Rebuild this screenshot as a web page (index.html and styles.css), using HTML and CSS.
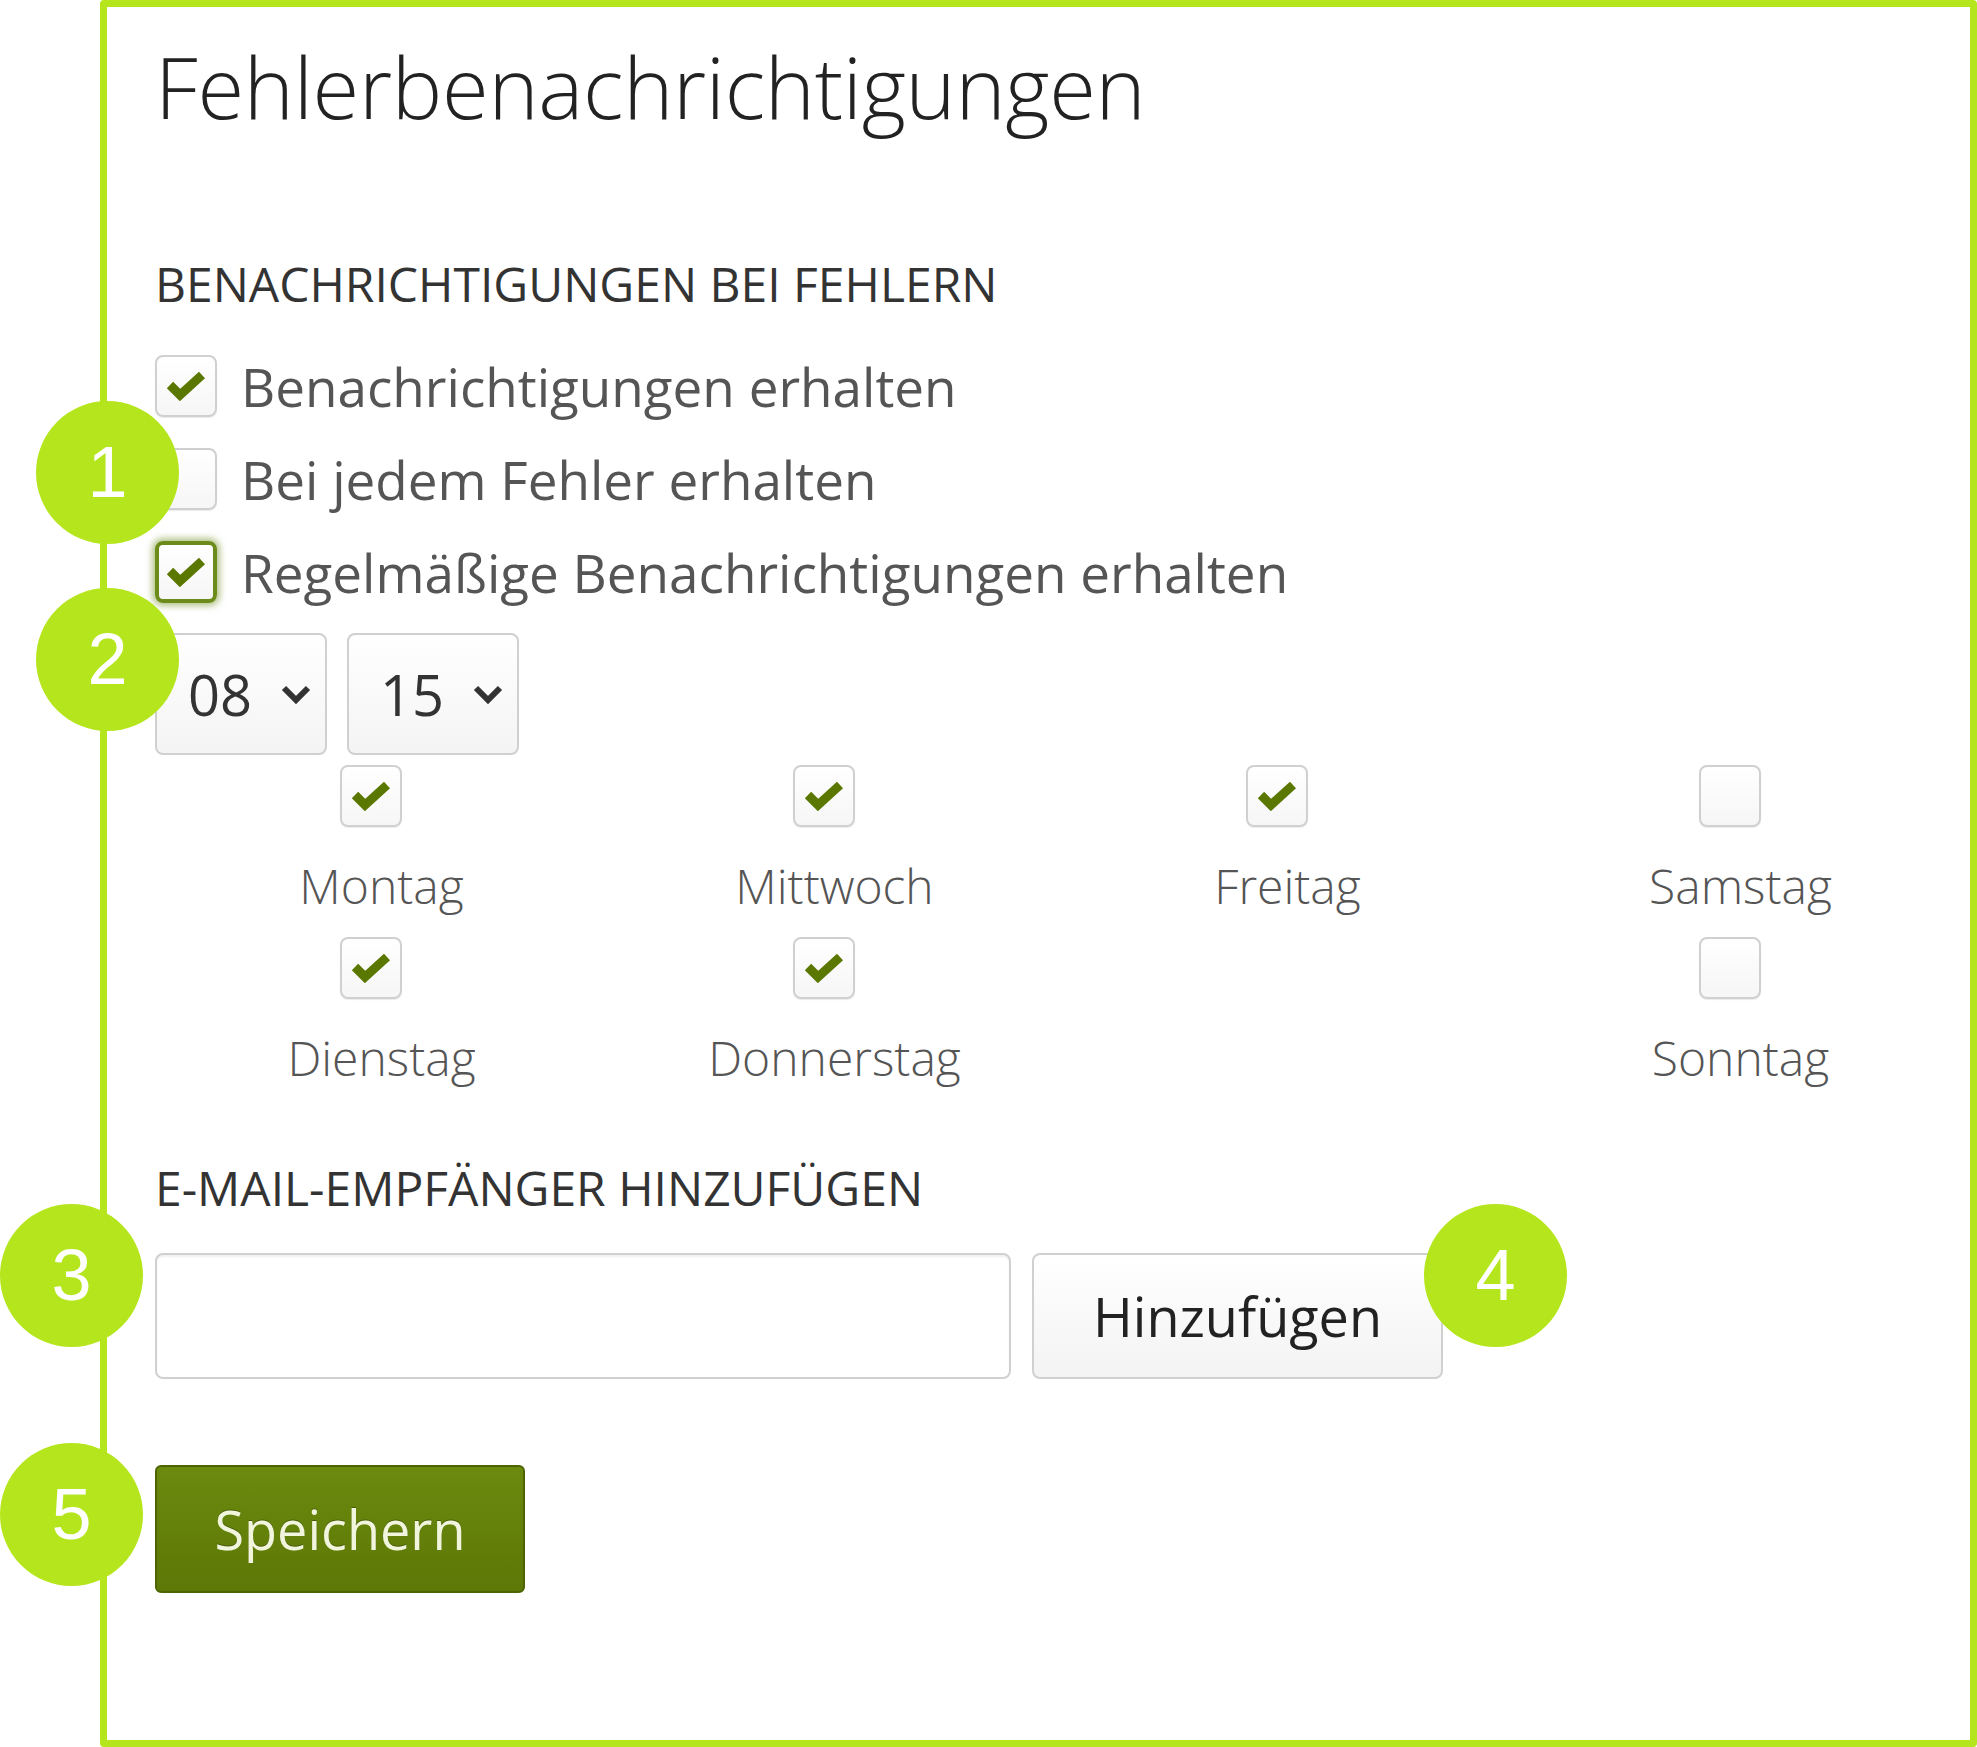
FILE: index.html
```html
<!DOCTYPE html>
<html lang="de">
<head>
  <meta charset="UTF-8">
  <meta name="viewport" content="width=device-width, initial-scale=1.0">
  <title>Fehlerbenachrichtigungen</title>
  <link rel="stylesheet" href="styles.css">
</head>
<body>

<div class="frame">
  <h1>Fehlerbenachrichtigungen</h1>

  <h2>Benachrichtigungen bei Fehlern</h2>
  <div class="options">
    <label class="option">
      <span class="box checked"><svg viewBox="0 0 40 30"><polyline points="4,14 14,24 36,4"/></svg></span>
      Benachrichtigungen erhalten
    </label>
    <label class="option">
      <span class="box"></span>
      Bei jedem Fehler erhalten
    </label>
    <label class="option">
      <span class="box checked focus"><svg viewBox="0 0 40 30"><polyline points="4,14 14,24 36,4"/></svg></span>
      Regelmäßige Benachrichtigungen erhalten
    </label>
  </div>

  <div class="time">
    <div class="select">
      <span>08</span>
      <svg class="chevron" viewBox="0 0 30 20"><polyline points="3,4 15,16 27,4"/></svg>
    </div>
    <div class="select">
      <span>15</span>
      <svg class="chevron" viewBox="0 0 30 20"><polyline points="3,4 15,16 27,4"/></svg>
    </div>
  </div>

  <!-- Wochentage, spaltenweise -->
  <div class="days">
    <div class="day-col">
      <label class="day">
        <span class="box checked"><svg viewBox="0 0 40 30"><polyline points="4,14 14,24 36,4"/></svg></span>
        <span class="day-name">Montag</span>
      </label>
      <label class="day">
        <span class="box checked"><svg viewBox="0 0 40 30"><polyline points="4,14 14,24 36,4"/></svg></span>
        <span class="day-name">Dienstag</span>
      </label>
    </div>
    <div class="day-col">
      <label class="day">
        <span class="box checked"><svg viewBox="0 0 40 30"><polyline points="4,14 14,24 36,4"/></svg></span>
        <span class="day-name">Mittwoch</span>
      </label>
      <label class="day">
        <span class="box checked"><svg viewBox="0 0 40 30"><polyline points="4,14 14,24 36,4"/></svg></span>
        <span class="day-name">Donnerstag</span>
      </label>
    </div>
    <div class="day-col">
      <label class="day">
        <span class="box checked"><svg viewBox="0 0 40 30"><polyline points="4,14 14,24 36,4"/></svg></span>
        <span class="day-name">Freitag</span>
      </label>
    </div>
    <div class="day-col">
      <label class="day">
        <span class="box"></span>
        <span class="day-name">Samstag</span>
      </label>
      <label class="day">
        <span class="box"></span>
        <span class="day-name">Sonntag</span>
      </label>
    </div>
  </div>

  <h2 class="second">E-Mail-Empfänger hinzufügen</h2>
  <div class="recipient">
    <input type="text" class="email">
    <button class="btn-add">Hinzufügen</button>
  </div>

  <button class="btn-save">Speichern</button>
</div>

<!-- Markierungen -->
<div class="marker m1">1</div>
<div class="marker m2">2</div>
<div class="marker m3">3</div>
<div class="marker m4">4</div>
<div class="marker m5">5</div>

</body>
</html>
```

FILE: styles.css
```css
body {
  margin: 0;
  padding: 0;
  background-color: #fff;
  font-family: "Open Sans", Arial, sans-serif;
  color: #555;
}

.frame {
  box-sizing: border-box;
  margin-left: 100px;
  height: 1747px;
  border: 7px solid #b5e61d;
  border-radius: 4px;
  padding: 35px 0 0 48px;
}

h1 {
  margin: 0;
  font-size: 85px;
  font-weight: 300;
  line-height: 88px;
  letter-spacing: -0.3px;
  color: #222;
}

h2 {
  margin: 130px 0 0;
  font-size: 48px;
  font-weight: 400;
  line-height: 1;
  color: #333;
  text-transform: uppercase;
}

h2.second {
  margin-top: 82px;
}

/* Checkboxen */
.options {
  display: flex;
  flex-direction: column;
  gap: 31px;
  margin-top: 47px;
}

.option {
  display: flex;
  align-items: center;
  gap: 24px;
  height: 62px;
  font-size: 53px;
  line-height: 1;
  color: #555;
}

.box {
  box-sizing: border-box;
  display: flex;
  align-items: center;
  justify-content: center;
  flex: none;
  width: 62px;
  height: 62px;
  border: 2px solid #d0d0d0;
  border-radius: 8px;
  background: linear-gradient(#fff, #f6f6f6);
  box-shadow: 0 1px 1px rgba(0, 0, 0, 0.08);
}

.box svg {
  width: 40px;
  height: 30px;
}

.box polyline {
  fill: none;
  stroke: #5a7800;
  stroke-width: 9;
}

.box.focus {
  border: 4px solid #6b8b1a;
  box-shadow: 0 0 6px 3px rgba(107, 139, 26, 0.5);
}

/* Uhrzeit */
.time {
  display: flex;
  gap: 20px;
  margin-top: 30px;
}

.select {
  box-sizing: border-box;
  display: flex;
  align-items: center;
  justify-content: space-between;
  width: 172px;
  height: 122px;
  padding: 0 14px 0 31px;
  border: 2px solid #d0d0d0;
  border-radius: 8px;
  background: linear-gradient(#fff, #f4f4f4);
  font-size: 56px;
  line-height: 1;
  color: #333;
}

.chevron {
  width: 30px;
  height: 20px;
}

.chevron polyline {
  fill: none;
  stroke: #333;
  stroke-width: 6;
}

/* Wochentage */
.days {
  display: grid;
  grid-template-columns: repeat(4, 453px);
  margin-top: 10px;
}

.day-col {
  display: flex;
  flex-direction: column;
  gap: 27px;
}

.day {
  display: flex;
  flex-direction: column;
  align-items: center;
}

.day .box {
  margin: 0 22px 35px 0;
}

.day-name {
  font-size: 48px;
  font-weight: 300;
  line-height: 1;
  color: #555;
}

/* E-Mail */
.recipient {
  display: flex;
  gap: 21px;
  margin-top: 41px;
}

.email {
  box-sizing: border-box;
  width: 856px;
  height: 126px;
  border: 2px solid #d0d0d0;
  border-radius: 8px;
  background: #fff;
  box-shadow: inset 0 2px 2px rgba(0, 0, 0, 0.06);
}

.btn-add {
  box-sizing: border-box;
  width: 411px;
  height: 126px;
  border: 2px solid #d0d0d0;
  border-radius: 8px;
  background: linear-gradient(#fff, #f3f3f3);
  font-family: "Open Sans", Arial, sans-serif;
  font-size: 54px;
  color: #222;
  cursor: pointer;
}

.btn-save {
  box-sizing: border-box;
  display: block;
  width: 370px;
  height: 128px;
  margin-top: 86px;
  border: 2px solid #4d6403;
  border-radius: 6px;
  background: linear-gradient(#6b8a0e, #5d7806);
  font-family: "Open Sans", Arial, sans-serif;
  font-size: 54px;
  color: #f1f5dc;
  text-shadow: 0 -1px 0 rgba(0, 0, 0, 0.3);
  cursor: pointer;
}

/* Nummern-Markierungen */
.marker {
  position: absolute;
  width: 143px;
  height: 143px;
  border-radius: 50%;
  background-color: #b5e61d;
  color: #fff;
  font-family: "Liberation Sans", Arial, sans-serif;
  font-size: 72px;
  line-height: 143px;
  text-align: center;
}

.m1 { left: 36px; top: 401px; }
.m2 { left: 36px; top: 588px; }
.m3 { left: 0; top: 1204px; }
.m4 { left: 1424px; top: 1204px; }
.m5 { left: 0; top: 1443px; }
```
